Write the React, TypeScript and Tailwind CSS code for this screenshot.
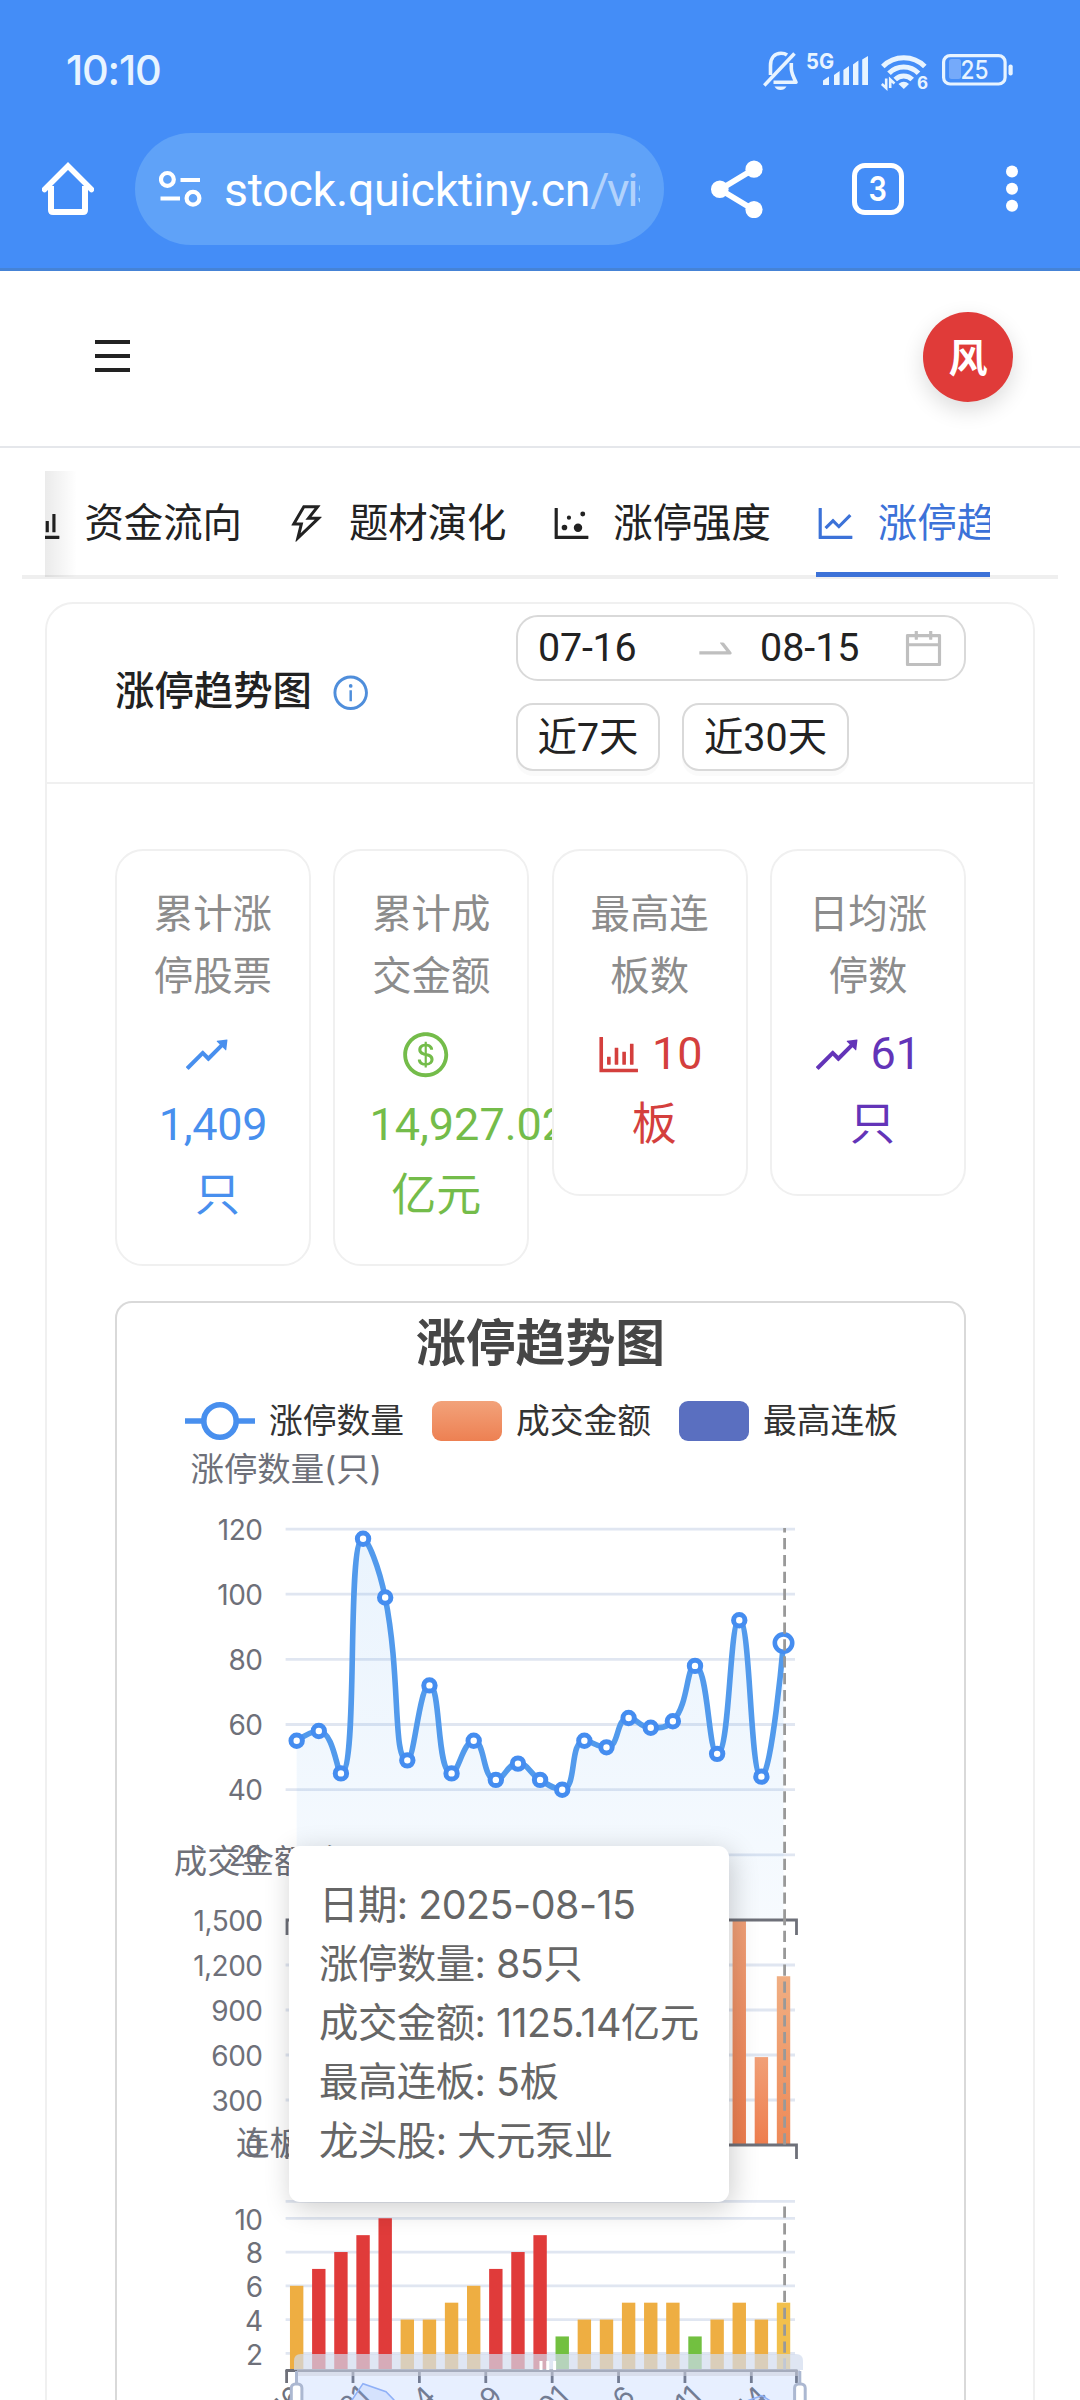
import React from "react";
import {
  AiOutlineBarChart,
  AiOutlineCalendar,
  AiOutlineDollarCircle,
  AiOutlineDotChart,
  AiOutlineInfoCircle,
  AiOutlineLineChart,
  AiOutlineRise,
  AiOutlineSwapRight,
  AiOutlineThunderbolt,
} from "react-icons/ai";

const SYSTEM_FONT = "Inter, 'Noto Sans CJK SC', sans-serif";

/* ---------- status bar and browser toolbar ---------- */

function BellOff() {
  return (
    <svg width="36" height="40" viewBox="0 0 36 40" fill="none" stroke="#e8f4ff" strokeWidth="3.6">
      <path d="M7.5 24V14.5C7.5 6.5 12 2.2 18 2.2C20.5 2.2 22.5 2.8 24 4" />
      <path d="M28.3 12V17.5Q28.3 22 33 31.2H10.5" strokeLinejoin="round" />
      <path d="M1.2 34.5L31.5 2.5" />
      <path d="M11.5 35.5H23.5Q21.5 39 17.5 39Q13.5 39 11.5 35.5Z" fill="#e8f4ff" stroke="none" />
    </svg>
  );
}

function Signal() {
  return (
    <svg width="62" height="40" viewBox="0 0 62 40" className="ml-[7px] overflow-visible" fill="#e8f4ff">
      <text x="0" y="17.5" fontSize="22" fontWeight="700" fontFamily={SYSTEM_FONT} textLength="28" lengthAdjust="spacingAndGlyphs">5G</text>
      <path d="M17 34V29.5L23 25.5V34ZM28 34V24L33.6 20V34ZM37.4 34V19L43 15V34ZM47 34V13.5L52.4 9.5V34ZM56.2 34V8.5L62 5V34Z" />
    </svg>
  );
}

function Wifi() {
  return (
    <svg width="48" height="40" viewBox="0 0 48 40" className="ml-[13px] overflow-visible" fill="none" stroke="#e8f4ff" strokeWidth="5">
      <path d="M1.8 15.5A29.5 29.5 0 0 1 43.8 15.5" />
      <path d="M8 22.3A20.5 20.5 0 0 1 37.5 22.3" />
      <path d="M14.2 28.5A12 12 0 0 1 31.2 28.5" />
      <path d="M17.5 33Q22.8 28.5 28 33L22.8 38Z" fill="#e8f4ff" stroke="none" />
      <path d="M5.2 27.5V37L0.8 33M9.2 37V28.5L13.5 32.5" strokeWidth="2.6" />
      <text x="36" y="37.5" fontSize="17" fontWeight="700" stroke="none" fill="#e8f4ff" fontFamily={SYSTEM_FONT}>6</text>
    </svg>
  );
}

function Battery() {
  return (
    <svg width="71" height="40" viewBox="0 0 71 40" className="ml-[13px]">
      <rect x="1.6" y="4.6" width="61.5" height="28.4" rx="6.5" fill="none" stroke="#e8f4ff" strokeWidth="3.2" />
      <rect x="7" y="8" width="12" height="20" rx="2.5" fill="#75aafa" />
      <text x="18.5" y="28" fontSize="25.5" fontWeight="500" fill="#e8f4ff" fontFamily={SYSTEM_FONT} textLength="28" lengthAdjust="spacingAndGlyphs">25</text>
      <rect x="66.5" y="13.5" width="4.2" height="11" rx="2" fill="#e8f4ff" />
    </svg>
  );
}

function BrowserChrome() {
  return (
    <div className="h-[271px] shrink-0 bg-[#448df7] border-b-[3px] border-[#4583d6] pt-[23px]">
      <div className="h-[96px] flex items-center justify-between pl-[66px] pr-[67px]">
        <span className="pb-[1px] text-[41.5px] leading-none font-medium tracking-[-1.2px] text-[#e8f4ff] font-['Inter',sans-serif]">10:10</span>
        <div className="flex items-center">
          <BellOff />
          <Signal />
          <Wifi />
          <Battery />
        </div>
      </div>
      <div className="mt-[14px] h-[112px] flex items-center pl-[42px]">
        <svg width="52" height="54" viewBox="0 0 52 54" fill="none" stroke="white" strokeWidth="6">
          <path d="M9 24V48Q9 50 11 50H41Q43 50 43 48V24" />
          <path d="M2.5 27.5L26 4L49.5 27.5" strokeWidth="5.5" strokeLinecap="round" />
        </svg>
        <div className="ml-[41px] w-[529px] h-[112px] rounded-full bg-[#5fa2f8] flex items-center pl-[24px]">
          <svg width="43" height="38" viewBox="0 0 43 38" fill="none" stroke="white" strokeWidth="4.2">
            <circle cx="8.4" cy="9.4" r="6.4" />
            <path d="M21.5 10H41M1.5 28.5H21" />
            <circle cx="34" cy="28.3" r="6.4" />
          </svg>
          <div className="ml-[22px] pt-[2px] w-[416px] overflow-hidden whitespace-nowrap text-[46.5px] leading-[60px] tracking-[-0.25px] text-white font-['Roboto',sans-serif]">
            stock.quicktiny.cn<span className="text-[#b2d2fc] tracking-[-2.4px]">/vis</span>
          </div>
        </div>
        <svg width="52" height="58" viewBox="0 0 52 58" className="ml-[47px]" fill="white">
          <path d="M43 9L9 29.5L43 50" fill="none" stroke="white" strokeWidth="5.6" />
          <circle cx="43" cy="9.2" r="8.6" />
          <circle cx="8.8" cy="29.3" r="8.8" />
          <circle cx="43" cy="49.6" r="8.6" />
        </svg>
        <div className="ml-[89px] w-[52px] h-[52px] rounded-[13px] border-[5.5px] border-white flex items-center justify-center text-white text-[34px] font-semibold leading-none font-['Inter',sans-serif]">
          <span className="inline-block scale-x-85">3</span>
        </div>
        <svg width="12" height="48" viewBox="0 0 12 48" className="ml-[102px]" fill="white">
          <circle cx="6" cy="6.5" r="6" />
          <circle cx="6" cy="23.7" r="6" />
          <circle cx="6" cy="40.7" r="6" />
        </svg>
      </div>
    </div>
  );
}

/* ---------- site header and tabs ---------- */

function SiteHeader() {
  return (
    <div className="h-[177px] shrink-0 border-b-2 border-[#e5e7eb] flex items-center justify-between pl-[95px] pr-[67px] pb-[3px]">
      <div className="flex flex-col gap-[10px] pb-[2px]">
        <div className="h-[4px] w-[35px] bg-[#222]" />
        <div className="h-[4px] w-[35px] bg-[#222]" />
        <div className="h-[4px] w-[35px] bg-[#222]" />
      </div>
      <div className="w-[90px] h-[90px] rounded-full bg-[#e03b39] shadow-[0_8px_22px_rgba(0,0,0,0.14)] flex items-center justify-center text-white text-[39px] font-bold leading-none pb-[3px] font-['Noto_Sans_CJK_SC',sans-serif]">风</div>
    </div>
  );
}

const TABS = [
  { label: "资金流向", Icon: AiOutlineBarChart },
  { label: "题材演化", Icon: AiOutlineThunderbolt },
  { label: "涨停强度", Icon: AiOutlineDotChart },
  { label: "涨停趋势", Icon: AiOutlineLineChart, active: true },
];

function Tabs() {
  return (
    <div className="mt-[23px] mx-[22px] h-[108px] shrink-0 border-b-4 border-[#efefef]">
      <div className="relative ml-[23px] w-[945px] h-[106px] overflow-hidden">
        <div className="-ml-[22.5px] h-full flex gap-[45px]">
          {TABS.map(({ label, Icon, active }) => (
            <div key={label} className={active ? "relative shrink-0 flex items-center gap-[22.5px] text-[#3c72d8]" : "relative shrink-0 flex items-center gap-[22.5px] text-[#222]"}>
              <Icon className="w-[45px] h-[45px] -mx-[2.8px] mb-[2px]" />
              <span className="text-[39.4px] leading-[60px] pb-[1px]">{label}</span>
              {active && <div className="absolute left-0 right-0 bottom-0 h-[5px] bg-[#3c72d8]" />}
            </div>
          ))}
        </div>
        <div className="absolute left-0 top-0 h-full w-[32px] bg-linear-to-r from-black/8 to-transparent" />
      </div>
    </div>
  );
}

/* ---------- filter header ---------- */

function CardHeader() {
  return (
    <div className="h-[180px] border-b-2 border-[#f0f0f0] flex items-center pl-[68px] pr-[67px]">
      <span className="text-[39.4px] leading-[60px] font-medium text-[#222] pb-[2px]">涨停趋势图</span>
      <AiOutlineInfoCircle className="ml-[19px] w-[39.4px] h-[39.4px] text-[#4f8edb]" />
      <div className="ml-auto w-[450px] flex flex-col gap-[22px]">
        <div className="h-[66px] rounded-[22px] border-2 border-[#d9d9d9] flex items-center pl-[20px] pr-[18px] text-[#222] text-[39.4px] leading-none">
          <span className="w-[155px] tracking-[-0.2px]">07-16</span>
          <AiOutlineSwapRight className="w-[45px] h-[45px] text-[#bfbfbf]" />
          <span className="ml-[22px]">08-15</span>
          <AiOutlineCalendar className="ml-auto w-[45px] h-[45px] text-[#bfbfbf]" />
        </div>
        <div className="flex gap-[22px] text-[39.4px] leading-[60px] text-[#222]">
          <div className="w-[144px] h-[68px] rounded-[17px] border-2 border-[#d9d9d9] shadow-[0_5px_0_rgba(0,0,0,0.02)] flex items-center justify-center pt-[2px]">近7天</div>
          <div className="w-[167px] h-[68px] rounded-[17px] border-2 border-[#d9d9d9] shadow-[0_5px_0_rgba(0,0,0,0.02)] flex items-center justify-center pt-[2px]">近30天</div>
        </div>
      </div>
    </div>
  );
}

/* ---------- statistics ---------- */

function StatCard({ label, className, children }: { label: [string, string]; className: string; children: React.ReactNode }) {
  return (
    <div className="relative bg-white rounded-[28px] border-2 border-[#f0f0f0] pt-[33px] pb-[33px] whitespace-nowrap">
      <div className="text-center text-[39.4px] leading-[61.9px] text-[#8c8c8c]">
        <div>{label[0]}</div>
        <div>{label[1]}</div>
      </div>
      <div className={className}>{children}</div>
    </div>
  );
}

function Stats() {
  return (
    <div className="ml-[68px] mt-[65px] w-[851px] grid grid-cols-4 gap-x-[22.5px] items-start">
      <StatCard label={["累计涨", "停股票"]} className="mt-[11.5px] text-[45px] leading-[70.6px] text-[#488fee]">
        <div className="h-[70.6px] flex items-center justify-center pr-[13px]"><AiOutlineRise className="w-[51.4px] h-[51.4px]" /></div>
        <div className="text-center tracking-[-0.3px]">1,409</div>
        <div className="text-center pl-[9px]">只</div>
      </StatCard>
      <StatCard label={["累计成", "交金额"]} className="mt-[11.5px] text-[45px] leading-[70.6px] text-[#74bc4a]">
        <div className="h-[70.6px] flex items-center justify-center pr-[11px]"><AiOutlineDollarCircle className="w-[51.4px] h-[51.4px]" /></div>
        <div className="pl-[34px]">14,927.02</div>
        <div className="text-center pl-[10px]">亿元</div>
      </StatCard>
      <StatCard label={["最高连", "板数"]} className="mt-[11.5px] text-[45px] leading-[70.6px] text-[#d43f3d]">
        <div className="flex items-center justify-center gap-[8px] pr-[4px]"><AiOutlineBarChart className="w-[51.4px] h-[51.4px]" /><span>10</span></div>
        <div className="text-center pl-[9px]">板</div>
      </StatCard>
      <StatCard label={["日均涨", "停数"]} className="mt-[11.5px] text-[45px] leading-[70.6px] text-[#6334b8]">
        <div className="flex items-center justify-center gap-[8px] pr-[4px]"><AiOutlineRise className="w-[51.4px] h-[51.4px]" /><span>61</span></div>
        <div className="text-center pl-[9px]">只</div>
      </StatCard>
    </div>
  );
}

/* ---------- chart ---------- */

const LIMIT_UPS = [55, 58, 45, 117, 99, 49, 72, 45, 55, 43, 48, 43, 40, 55, 53, 62, 59, 61, 78, 51, 92, 44, 85];
const BOARDS = [6, 7, 8, 9, 10, 4, 4, 5, 6, 7, 8, 9, 3, 4, 4, 5, 5, 5, 3, 4, 5, 4, 5];
const AMOUNTS = [
  { index: 20, value: 1495 },
  { index: 21, value: 586 },
  { index: 22, value: 1125.14 },
];
const DATES = ["07-16", "07-21", "07-24", "07-29", "08-01", "08-06", "08-11", "08-14"];

const LEFT = 285.6;
const RIGHT = 795;
const BAND = 22.13;
const centerX = (i: number) => LEFT + BAND * (i + 0.5);
const countY = (v: number) => 1920 - v * 3.258;
const amountY = (v: number) => 2145 - v * 0.15;
const boardY = (v: number) => 2370.2 - (v - 1) * 16.88;

const clamp = (v: number, a: number, b: number) => Math.min(Math.max(v, Math.min(a, b)), Math.max(a, b));

/* Smooth curve whose control points never leave the box of their segment. */
function smoothPath(points: [number, number][]) {
  let d = `M${points[0][0]} ${points[0][1]}`;
  let c0: [number, number] = points[0];
  for (let i = 1; i < points.length; i++) {
    const [px, py] = points[i - 1];
    const [x, y] = points[i];
    let c1: [number, number] = [x, y];
    let next: [number, number] = [x, y];
    if (i < points.length - 1) {
      const [nx, ny] = points[i + 1];
      const prevLen = Math.hypot(x - px, y - py);
      const nextLen = Math.hypot(nx - x, ny - y);
      const r = nextLen / (nextLen + prevLen);
      const ax = clamp(x + (nx - px) * 0.5 * r, x, nx);
      const ay = clamp(y + (ny - py) * 0.5 * r, y, ny);
      const bx = clamp(x - ((ax - x) * prevLen) / nextLen, px, x);
      const by = clamp(y - ((ay - y) * prevLen) / nextLen, py, y);
      c1 = [bx, by];
      next = [x + ((x - bx) * nextLen) / prevLen, y + ((y - by) * nextLen) / prevLen];
    }
    d += `C${c0[0]} ${c0[1]} ${c1[0]} ${c1[1]} ${x} ${y}`;
    c0 = next;
  }
  return d;
}

const LINE_POINTS = LIMIT_UPS.map((v, i) => [centerX(i), countY(v)] as [number, number]);
const LINE = smoothPath(LINE_POINTS);
const LAST = LIMIT_UPS.length - 1;

function boardColor(v: number, i: number) {
  if (i === LAST) return "#f2c04c";
  if (v >= 7) return "#e03b3a";
  return v <= 3 ? "#72c040" : "#eeae42";
}

function GridLine({ y }: { y: number }) {
  return <path d={`M${LEFT} ${y}H${RIGHT}`} stroke="#e0e6f1" strokeWidth="2.8" />;
}

function AxisLabel({ y, children }: { y: number; children: React.ReactNode }) {
  return (
    <text x="262.5" y={y + 10.8} fontSize="28" letterSpacing="-0.5" textAnchor="end" fill="#6e7079">
      {children}
    </text>
  );
}

function Plot() {
  return (
    <svg width="846" height="952" viewBox="117 1448 846 952" className="block shrink-0" fontFamily={SYSTEM_FONT}>
      <defs>
        <linearGradient id="area" x1="0" y1="0" x2="0" y2="1">
          <stop offset="0" stopColor="#4098f0" stopOpacity="0.11" />
          <stop offset="1" stopColor="#4098f0" stopOpacity="0.045" />
        </linearGradient>
        <linearGradient id="amount" x1="0" y1="0" x2="0" y2="1">
          <stop offset="0" stopColor="#f1a077" />
          <stop offset="1" stopColor="#ee7d4e" />
        </linearGradient>
        <linearGradient id="amountActive" x1="0" y1="0" x2="0" y2="1">
          <stop offset="0" stopColor="#f0ae82" />
          <stop offset="1" stopColor="#ee8a58" />
        </linearGradient>
      </defs>

      {/* limit-up count */}
      {[120, 100, 80, 60, 40, 20].map((v) => <GridLine key={v} y={countY(v)} />)}
      {[120, 100, 80, 60, 40, 20, 0].map((v) => <AxisLabel key={v} y={countY(v)}>{v}</AxisLabel>)}
      <text x="286.2" y="1480.5" fontSize="33.4" textAnchor="middle" fill="#6e7079">涨停数量(只)</text>
      <path d={`${LINE}V1920H${centerX(0)}Z`} fill="url(#area)" />

      {/* turnover */}
      {[1200, 900, 600, 300].map((v) => <GridLine key={v} y={amountY(v)} />)}
      {[1500, 1200, 900, 600, 300, 0].map((v) => <AxisLabel key={v} y={amountY(v)}>{v.toLocaleString("en-US")}</AxisLabel>)}
      <text x="286.2" y="1873" fontSize="33.4" textAnchor="middle" fill="#6e7079">成交金额(亿元)</text>
      {AMOUNTS.map(({ index, value }) => (
        <rect key={index} x={centerX(index) - 6.7} y={amountY(value)} width="13.4" height={2145 - amountY(value)} fill={index === LAST ? "url(#amountActive)" : "url(#amount)"} />
      ))}
      <path d="M285.6 1920H796.5V1935M287 1920V1935M285.6 2145H796.5V2159M287 2145V2159" fill="none" stroke="#6e7079" strokeWidth="2.8" />

      {/* consecutive boards */}
      {[11, 10, 8, 6, 4, 2].map((v) => <GridLine key={v} y={boardY(v)} />)}
      {[10, 8, 6, 4, 2].map((v) => <AxisLabel key={v} y={boardY(v) + 0.5}>{v}</AxisLabel>)}
      <text x="286.2" y="2155" fontSize="33.4" textAnchor="middle" fill="#6e7079">连板数</text>
      {BOARDS.map((v, i) => (
        <rect key={i} x={centerX(i) - 6.7} y={boardY(v)} width="13.4" height={2370 - boardY(v)} fill={boardColor(v, i)} />
      ))}
      <path d="M285.6 2370.5H797.5" stroke="#6e7079" strokeWidth="2.8" />
      {[0, 3, 6, 9, 12, 15, 18, 21, 23.04].map((i) => (
        <path key={i} d={`M${LEFT + 1 + BAND * i} 2370V2383`} stroke="#6e7079" strokeWidth="2.8" />
      ))}
      {DATES.map((label, i) => (
        <text key={label} fontSize="28" textAnchor="end" fill="#6e7079" transform={`translate(${centerX(i * 3) + 1} 2391) rotate(-45)`} y="10">
          {label}
        </text>
      ))}

      {/* line series */}
      <path d={LINE} fill="none" stroke="#529aec" strokeWidth="5.6" strokeLinejoin="bevel" />
      {LINE_POINTS.map(([x, y], i) => (
        <circle key={i} cx={x} cy={y} r={i === LAST ? 8.7 : 5.7} fill="white" stroke="#458df0" strokeWidth={i === LAST ? 4.6 : 5} />
      ))}

      {/* axis pointer */}
      <g stroke="#999" strokeWidth="2.8" strokeDasharray="11.25 5.625">
        <path d="M784.6 1920.5V1528" />
        <path d="M784.6 2144.6V1920" />
        <path d="M784.6 2369.5V2202" />
      </g>

      {/* range slider */}
      <path d="M294 2370V2361Q294 2354 301 2354H796Q803 2354 803 2361V2370Z" fill="#d2dbee" fillOpacity="0.7" />
      <path d="M541 2361V2370M547.8 2361V2370M554.6 2361V2370" stroke="white" strokeWidth="3" />
      <rect x="297" y="2370" width="503" height="6" fill="#c4cde2" fillOpacity="0.65" />
      <rect x="297" y="2376" width="503" height="40" fill="#87afff" fillOpacity="0.2" />
      <path d="M341 2420L352 2400L363 2383.7L386 2391.7L394 2400L400 2420ZM744 2402L762 2395.5L772 2402Z" fill="#8fb0f7" fillOpacity="0.2" stroke="#8fb0f7" strokeWidth="1.5" />
      <g stroke="#acb8d1" strokeWidth="3" fill="white">
        <path d="M296.5 2371V2384M799.8 2371V2384" />
        <rect x="291.3" y="2384" width="10.6" height="40" rx="4" />
        <rect x="794.6" y="2384" width="10.6" height="40" rx="4" />
      </g>
    </svg>
  );
}

function ChartCard() {
  return (
    <div className="relative ml-[68px] mt-[35px] w-[851px] h-[1160px] rounded-[17px] border-2 border-[#d9d9d9] bg-white">
      <div className="h-[78px] leading-[82px] text-center text-[49.8px] font-bold text-[#464646]">涨停趋势图</div>
      <div className="mt-[13px] h-[54px] flex items-center pl-[68px] text-[33.75px] leading-[48px] text-[#333]">
        <svg width="70" height="40" viewBox="0 0 70 40" fill="none" stroke="#488fee" strokeWidth="5.6">
          <path d="M0 20H70" />
          <circle cx="35" cy="20" r="16.2" fill="white" />
        </svg>
        <span className="ml-[14px] pt-[2px]">涨停数量</span>
        <div className="ml-[28px] w-[70px] h-[40px] rounded-[9px] bg-linear-to-b from-[#f2a27a] to-[#ed8052]" />
        <span className="ml-[14px] pt-[2px]">成交金额</span>
        <div className="ml-[28px] w-[70px] h-[40px] rounded-[9px] bg-[#5a6fc0]" />
        <span className="ml-[14px] pt-[2px]">最高连板</span>
      </div>
      <Plot />
      <div className="absolute left-[172px] top-[543px] w-[440px] h-[356px] rounded-[11px] bg-white shadow-[3px_6px_28px_rgba(0,0,0,0.2)] pt-[30px] pl-[30px] text-[39.4px] leading-[58.9px] tracking-[-0.5px] text-[#666] whitespace-nowrap font-['Inter','Noto_Sans_CJK_SC',sans-serif]">
        <div>日期: 2025-08-15</div>
        <div>涨停数量: 85只</div>
        <div>成交金额: 1125.14亿元</div>
        <div>最高连板: 5板</div>
        <div>龙头股: 大元泵业</div>
      </div>
    </div>
  );
}

export default function App() {
  return (
    <div className="w-[1080px] h-[2400px] overflow-hidden bg-white flex flex-col font-['Roboto','Noto_Sans_CJK_SC',sans-serif]">
      <BrowserChrome />
      <SiteHeader />
      <Tabs />
      <div className="mt-[23px] ml-[45px] w-[990px] h-[1900px] shrink-0 rounded-[28px] border-2 border-[#f0f0f0]">
        <CardHeader />
        <Stats />
        <ChartCard />
      </div>
    </div>
  );
}
